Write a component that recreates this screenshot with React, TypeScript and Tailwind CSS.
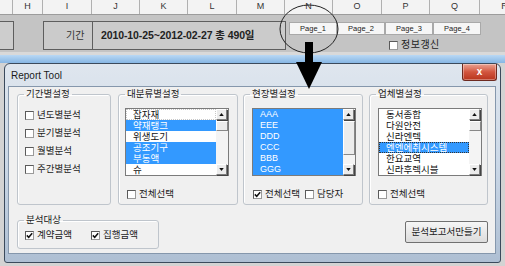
import React from 'react'

const headerCols = [
  { cls: 'w-[13px]', l: '' },
  { cls: 'w-[30px]', l: 'H' },
  { cls: 'w-[49px]', l: 'I' },
  { cls: 'w-[48px]', l: 'J' },
  { cls: 'w-[48px]', l: 'K' },
  { cls: 'w-[49px]', l: 'L' },
  { cls: 'w-[48px]', l: 'M' },
  { cls: 'w-[48px]', l: 'N' },
  { cls: 'w-[49px]', l: 'O' },
  { cls: 'w-[48px]', l: 'P' },
  { cls: 'w-[50px]', l: 'Q' },
  { cls: 'w-[50px]', l: 'R' },
]

type Item = { text: string; sel?: boolean; focus?: 'light' | 'dark' }

const bigList: Item[] = [
  { text: '잡자재', focus: 'light' },
  { text: '약재탱크', sel: true },
  { text: '위생도기' },
  { text: '공조기구', sel: true },
  { text: '부동액', sel: true },
  { text: '슈' },
]

const siteList: Item[] = ['AAA', 'EEE', 'DDD', 'CCC', 'BBB', 'GGG'].map((t) => ({ text: t, sel: true }))

const vendorList: Item[] = [
  { text: '동서종합' },
  { text: '다원안전' },
  { text: '신라엔텍' },
  { text: '엔엔에취시스템', sel: true, focus: 'dark' },
  { text: '한요교역' },
  { text: '신라후렉시블' },
]

function Check({ checked }: { checked?: boolean }) {
  return (
    <span className="flex h-[9px] w-[9px] shrink-0 items-center justify-center border border-t-[#5a5a5a] border-l-[#5a5a5a] border-r-[#9a9a9a] border-b-[#9a9a9a] bg-white">
      {checked && (
        <svg viewBox="0 0 7 7" className="h-[7px] w-[7px]">
          <path d="M0.8 3.4 L2.7 5.3 L6.2 1.2" stroke="#111" strokeWidth="1.5" fill="none" />
        </svg>
      )}
    </span>
  )
}

function CheckLabel({ label, checked }: { label: string; checked?: boolean }) {
  return (
    <div className="flex h-[12px] items-center gap-[3px] text-[9.5px] leading-[12px] text-[#222]">
      <Check checked={checked} />
      <span>{label}</span>
    </div>
  )
}

function Arrow({ down }: { down?: boolean }) {
  return (
    <div className="flex h-[11px] w-[11px] items-center justify-center border border-[#fff] border-r-[#7c7c7c] border-b-[#7c7c7c] bg-[#ececec] shadow-[1px_1px_0_#444]">
      <svg viewBox="0 0 6 4" className="h-[3px] w-[5px]">
        <path d={down ? 'M0 0 L6 0 L3 4 Z' : 'M0 4 L6 4 L3 0 Z'} fill="#111" />
      </svg>
    </div>
  )
}

function ListBox({ items, thumb, latin }: { items: Item[]; thumb: 'small' | 'big'; latin?: boolean }) {
  return (
    <div className="flex h-[68px] border border-[#7b7b7b] bg-white">
      <div className="flex flex-1 flex-col">
        {items.map((it, i) => (
          <div
            key={i}
            className={`flex h-[11px] items-center pl-[7px] leading-[11px] ${latin ? 'text-[9px]' : 'text-[9.5px]'} ${
              it.sel ? 'bg-[#3399ff] text-white' : 'text-[#111]'
            } ${
              it.focus === 'dark'
                ? 'outline outline-1 outline-dotted outline-offset-[-1px] outline-[#333]'
                : it.focus === 'light'
                  ? 'outline outline-1 outline-dotted outline-offset-[-1px] outline-[#c8c8c8]'
                  : ''
            }`}
          >
            {it.text}
          </div>
        ))}
      </div>
      <div className="flex w-[12px] flex-col bg-[#f4f4f4]">
        <Arrow />
        {thumb === 'big' ? (
          <div className="mt-[1px] h-[34px] border border-[#fff] border-r-[#888] border-b-[#888] bg-[#ececec]" />
        ) : (
          <div className="mt-[1px] h-[10px] border border-[#fff] border-r-[#888] border-b-[#888] bg-[#ececec]" />
        )}
        <div className="flex-1" />
        <Arrow down />
      </div>
    </div>
  )
}

function Group({ title, cls, children }: { title: string; cls: string; children: React.ReactNode }) {
  return (
    <fieldset className={`rounded-[3px] border border-[#bfc5cc] shadow-[inset_1px_1px_0_#fff] ${cls}`}>
      <legend className="ml-[6px] px-[2px] text-[9.5px] leading-[12px] text-[#222]">{title}</legend>
      {children}
    </fieldset>
  )
}

export default function App() {
  return (
    <div className="relative h-[266px] w-[505px] overflow-hidden bg-[#d3d3d3] font-['Liberation_Sans','Noto_Sans_CJK_KR',sans-serif]">
      {/* sheet column header */}
      <div className="flex h-[15px] border-b border-[#9c9c9c] bg-[#f3f3f3]">
        {headerCols.map((c, i) => (
          <div
            key={i}
            className={`${c.cls} flex shrink-0 items-center justify-center border-r border-[#b0b0b0] text-[9px] text-[#333]`}
          >
            {c.l}
          </div>
        ))}
      </div>

      {/* sheet row */}
      <div className="flex h-[37px] items-start bg-[#c4c4c4] pt-[6px]">
        <div className="h-[29px] w-[14px] border-y border-r border-[#5e5e5e] bg-[#cdcdcd]" />
        <div className="ml-[29px] flex h-[29px] w-[50px] items-center border border-[#5e5e5e] bg-[#cbcbcb] pl-[22px] text-[10px] text-[#333]">
          기간
        </div>
        <div className="flex h-[29px] w-[193px] items-center border-y border-r border-[#5e5e5e] bg-[#cbcbcb] pl-[8px] text-[10.5px] font-bold tracking-[-0.1px] text-[#222]">
          2010-10-25~2012-02-27 총 490일
        </div>
        <div className="ml-[3px] mt-[1px] flex flex-col">
          <div className="flex">
            {['Page_1', 'Page_2', 'Page_3', 'Page_4'].map((p) => (
              <div
                key={p}
                className="flex h-[13px] w-[48px] items-center justify-center border border-[#a9a9a9] bg-[#f6f6f6] text-[7.5px] text-[#222]"
              >
                {p}
              </div>
            ))}
          </div>
          <div className="ml-[100px] mt-[5px] flex items-center gap-[3px] text-[10px] leading-[10px] tracking-[0.5px] text-[#222]">
            <Check />
            <span>정보갱신</span>
          </div>
        </div>
      </div>
      <div className="h-[3px] bg-[#d9d9d9]" />
      <div className="h-[8px] bg-linear-to-b from-[#b9d8f4] to-[#86b6e4]" />

      {/* Report Tool window */}
      <div className="ml-[4px] flex h-[200px] w-[497px] flex-col rounded-t-[6px] rounded-b-[3px] border border-[#3b4a5c] bg-linear-to-b from-[#dfe6ee] via-[#cbd8e7] to-[#aebfd3]">
        <div className="flex h-[22px] items-start justify-between">
          <div className="self-center pl-[6px] text-[10px] text-[#1b1b1b]">Report Tool</div>
          <div className="mr-[3px] flex h-[17px] w-[35px] items-center justify-center rounded-b-[3px] border border-t-0 border-[#6d2a20] bg-linear-to-b from-[#e9a293] via-[#d2553e] to-[#b8341c] text-[10px] font-bold leading-none text-white shadow-[inset_0_0_0_1px_rgba(255,255,255,0.35)]">
            x
          </div>
        </div>

        <div className="ml-[3px] flex h-[168px] w-[488px] flex-col border border-[#8597ac] bg-[#f0f0f0]">
          {/* first row of groups */}
          <div className="flex items-start pt-[1px]">
            <Group title="기간별설정" cls="ml-[8px] h-[117px] w-[94px]">
              <div className="flex flex-col gap-[6px] pl-[7px] pt-[9px]">
                <CheckLabel label="년도별분석" />
                <CheckLabel label="분기별분석" />
                <CheckLabel label="월별분석" />
                <CheckLabel label="주간별분석" />
              </div>
            </Group>

            <Group title="대분류별설정" cls="ml-[7px] h-[117px] w-[120px]">
              <div className="ml-[6px] mt-[8px] w-[104px]">
                <ListBox items={bigList} thumb="small" />
              </div>
              <div className="ml-[8px] mt-[12px]">
                <CheckLabel label="전체선택" />
              </div>
            </Group>

            <Group title="현장별설정" cls="ml-[5px] h-[117px] w-[120px]">
              <div className="ml-[8px] mt-[8px] w-[104px]">
                <ListBox items={siteList} thumb="big" latin />
              </div>
              <div className="ml-[9px] mt-[12px] flex gap-[5px]">
                <CheckLabel label="전체선택" checked />
                <CheckLabel label="담당자" />
              </div>
            </Group>

            <Group title="업체별설정" cls="ml-[6px] h-[117px] w-[119px]">
              <div className="ml-[8px] mt-[8px] w-[104px]">
                <ListBox items={vendorList} thumb="small" />
              </div>
              <div className="ml-[8px] mt-[12px]">
                <CheckLabel label="전체선택" />
              </div>
            </Group>
          </div>

          {/* second row */}
          <div className="flex items-start justify-between">
            <Group title="분석대상" cls="ml-[8px] mt-[9px] h-[35px] w-[142px]">
              <div className="flex gap-[19px] pl-[7px] pt-[3px]">
                <CheckLabel label="계약금액" checked />
                <CheckLabel label="집행금액" checked />
              </div>
            </Group>
            <button className="mr-[7px] mt-[16px] flex h-[22px] w-[83px] items-center justify-center rounded-[2px] border border-[#707070] bg-linear-to-b from-[#f6f6f6] to-[#dcdcdc] text-[9.5px] text-[#222]">
              분석보고서만들기
            </button>
          </div>
        </div>
      </div>

      {/* annotation: circle around Page_1 and arrow down to the dialog */}
      <svg className="pointer-events-none absolute left-[278px] top-[2px]" width="62" height="90" viewBox="0 0 62 90">
        <ellipse cx="31" cy="27" rx="29" ry="24" fill="none" stroke="#222" strokeWidth="1" />
        <rect x="27" y="40" width="8" height="22" fill="#000" />
        <path d="M18 60 L44 60 L31 87 Z" fill="#000" />
      </svg>
    </div>
  )
}
